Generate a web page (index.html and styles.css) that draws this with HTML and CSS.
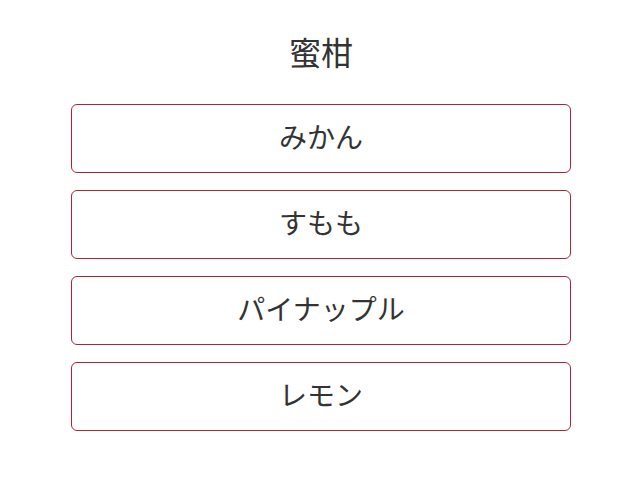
FILE: index.html
```html
<!DOCTYPE html>
<html lang="ja">
<head>
<meta charset="utf-8">
<link rel="stylesheet" href="styles.css">
</head>
<body>
<main class="page">
  <h1 class="title">蜜柑</h1>
  <ul class="list">
    <li class="item">みかん</li>
    <li class="item">すもも</li>
    <li class="item">パイナップル</li>
    <li class="item">レモン</li>
  </ul>
</main>
</body>
</html>
```
FILE: styles.css
```css
html, body {
  margin: 0;
  padding: 0;
  background: #fff;
}
body {
  font-family: "Noto Sans CJK JP", "Noto Sans", sans-serif;
  color: #333;
}
.page {
  width: 500px;
  margin: 0 69px 0 71px;
  padding-top: 32px;
  box-sizing: border-box;
}
.title {
  margin: 0 0 34px;
  font-size: 32px;
  font-weight: 400;
  line-height: 38px;
  text-align: center;
}
.list {
  list-style: none;
  margin: 0;
  padding: 0;
  display: flex;
  flex-direction: column;
  gap: 17px;
}
.item {
  height: 69px;
  box-sizing: border-box;
  padding-bottom: 5px;
  border: 1px solid #b22234;
  border-radius: 6px;
  display: flex;
  align-items: center;
  justify-content: center;
  font-size: 28px;
}
```
